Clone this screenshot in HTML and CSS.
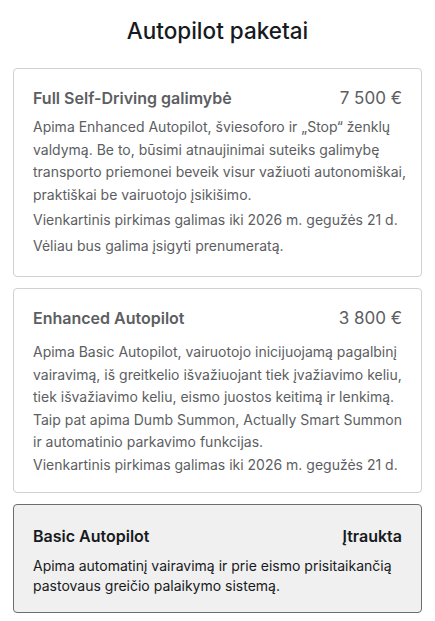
FILE: index.html
```html
<!DOCTYPE html>
<html lang="lt">
<head>
    <meta charset="UTF-8">
    <title>Autopilot paketai</title>
    <link rel="stylesheet" href="styles.css">
</head>
<body>
    <div class="container">
        <h2 class="pageTitle">Autopilot paketai</h2>

        <div class="package">
            <div class="packageHead">
                <span class="packageName">Full Self-Driving galimybė</span>
                <span class="packagePrice">7 500 €</span>
            </div>
            <p class="packageText">Apima Enhanced Autopilot, šviesoforo ir „Stop“ ženklų valdymą. Be to, būsimi atnaujinimai suteiks galimybę transporto priemonei beveik visur važiuoti autonomiškai, praktiškai be vairuotojo įsikišimo.</p>
            <p class="packageText">Vienkartinis pirkimas galimas iki 2026 m. gegužės 21 d.</p>
            <p class="packageText">Vėliau bus galima įsigyti prenumeratą.</p>
        </div>

        <div class="package enhanced">
            <div class="packageHead">
                <span class="packageName">Enhanced Autopilot</span>
                <span class="packagePrice">3 800 €</span>
            </div>
            <p class="packageText">Apima Basic Autopilot, vairuotojo inicijuojamą pagalbinį vairavimą, iš greitkelio išvažiuojant tiek įvažiavimo keliu, tiek išvažiavimo keliu, eismo juostos keitimą ir lenkimą. Taip pat apima Dumb Summon, Actually Smart Summon ir automatinio parkavimo funkcijas.</p>
            <p class="packageText">Vienkartinis pirkimas galimas iki 2026 m. gegužės 21 d.</p>
        </div>

        <div class="package included">
            <div class="packageHead">
                <span class="packageName">Basic Autopilot</span>
                <span class="packagePrice">Įtraukta</span>
            </div>
            <p class="packageText">Apima automatinį vairavimą ir prie eismo prisitaikančią pastovaus greičio palaikymo sistemą.</p>
        </div>
    </div>
</body>
</html>
```

FILE: styles.css
```css
body {
    font-family: Inter, "Noto Sans", sans-serif;
    margin: 0;
    background-color: #fff;
    color: #5c5e62;
}
.container {
    display: flex;
    flex-direction: column;
    gap: 11px;
    padding: 0 13px;
}
.pageTitle {
    margin: 17px 0 12px;
    text-align: center;
    font-size: 22.5px;
    font-weight: 500;
    line-height: 28px;
    color: #171a20;
}
.package {
    border: 1px solid #d0d1d2;
    border-radius: 4px;
    padding: 17px 7px 19px 19px;
}
.packageHead {
    display: flex;
    justify-content: space-between;
    align-items: baseline;
    margin-bottom: 6px;
    padding-right: 12px;
}
.packageName {
    font-size: 16px;
    font-weight: 600;
    line-height: 24px;
}
.packagePrice {
    font-size: 17px;
    line-height: 24px;
}
.packageText {
    margin: 0 0 3px;
    font-size: 14px;
    line-height: 22.5px;
}
.packageText:last-child {
    margin-bottom: 0;
}
.enhanced {
    padding-bottom: 16px;
}
.enhanced .packageHead {
    margin-bottom: 11px;
}
.enhanced .packageText {
    margin-bottom: 0;
}
.included {
    background-color: #f0f0f0;
    border-color: #6b6d70;
    color: #171a20;
    padding-top: 19px;
    padding-bottom: 16px;
}
.included .packageHead {
    margin-bottom: 8px;
}
.included .packagePrice {
    font-size: 16px;
    font-weight: 600;
}
.included .packageText {
    line-height: 20px;
}
```
